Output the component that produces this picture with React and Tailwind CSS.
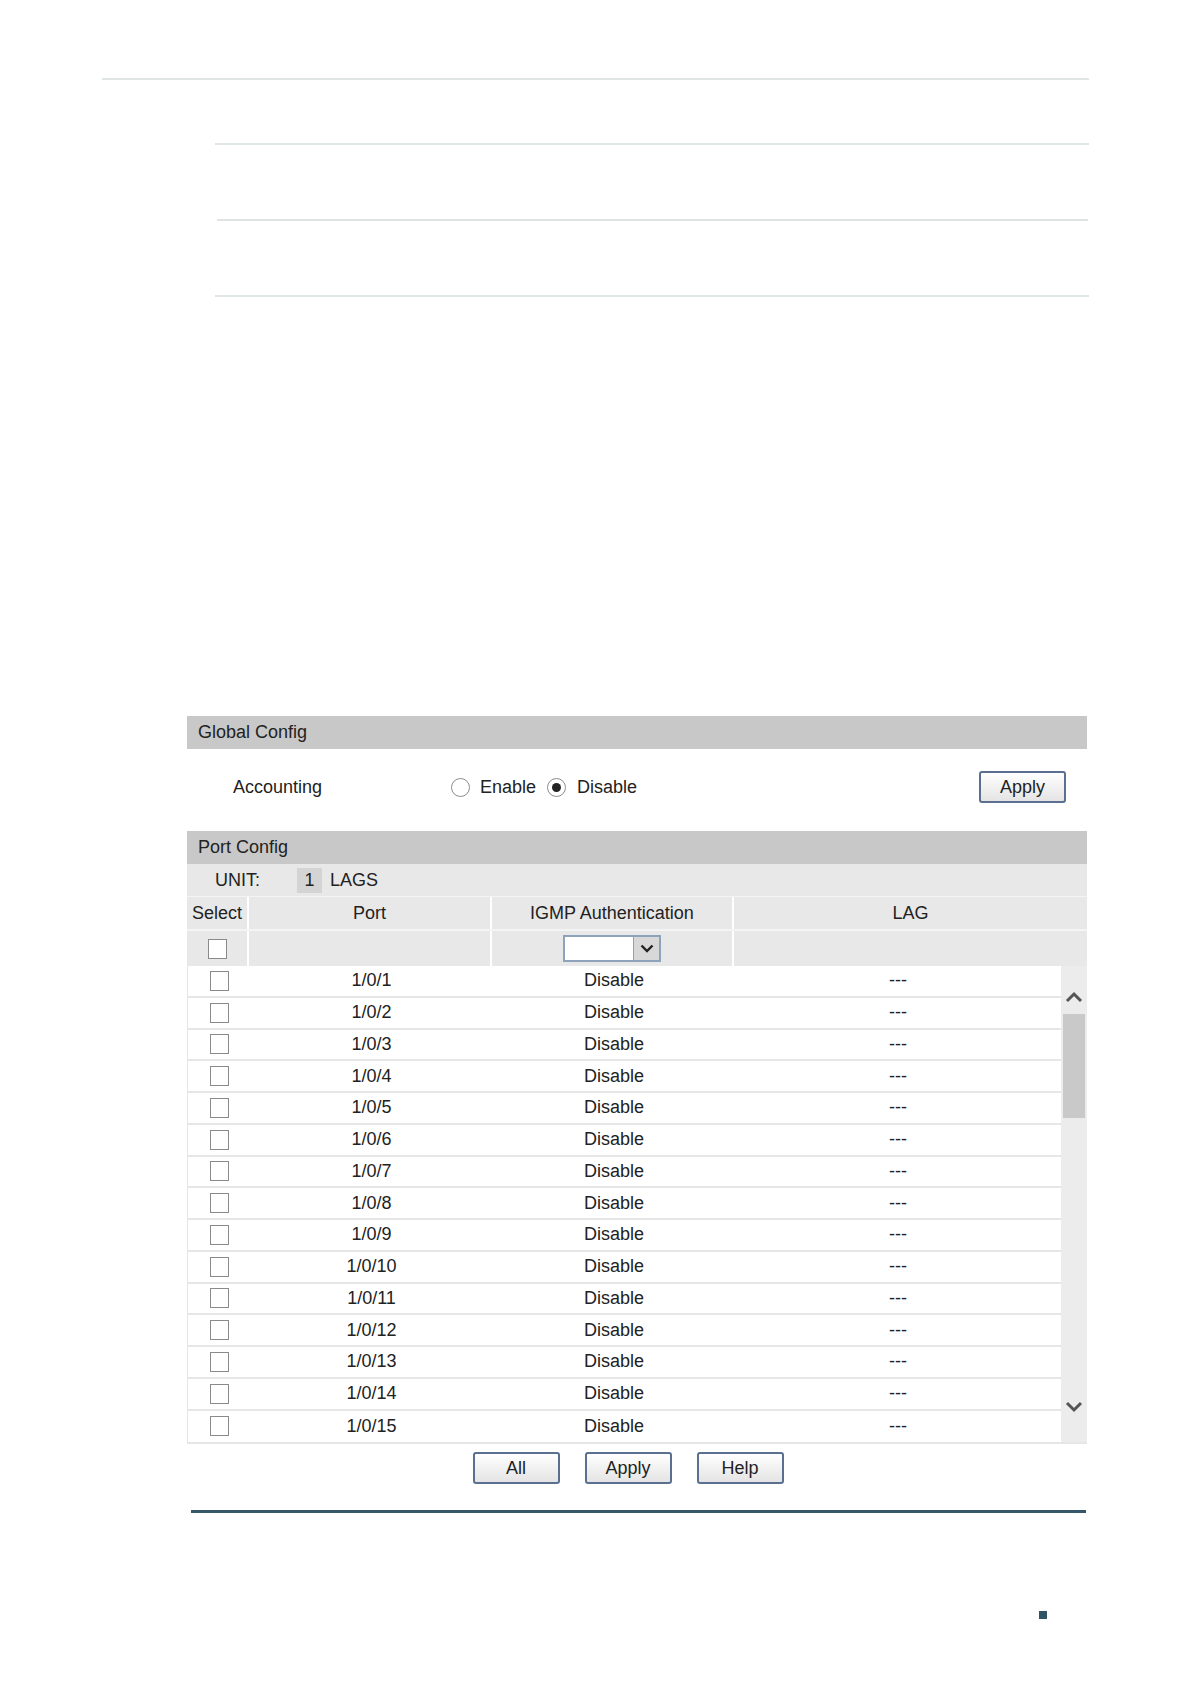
import React from 'react';

const ports = Array.from({ length: 15 }, (_, i) => `1/0/${i + 1}`);

function Checkbox() {
  return <span className="block w-[19px] h-[20px] border border-[#8a8a8a] bg-white" />;
}

function Btn({ children }) {
  return (
    <button className="w-[87px] h-[32px] rounded-[3px] border-2 border-[#5b7090] bg-gradient-to-b from-white to-[#e4e4e4] text-[18px] text-[#222]">
      {children}
    </button>
  );
}

export default function App() {
  return (
    <div className="w-[1191px] h-[1684px] bg-white text-[#222] pt-[78px]" style={{ fontFamily: '"Liberation Sans", Arial, sans-serif' }}>
      {/* top rules */}
      <div className="ml-[102px] w-[987px] h-[2px] bg-[#e0e5e5]" />
      <div className="ml-[215px] mt-[63px] w-[874px] h-[2px] bg-[#dfe6e6]" />
      <div className="ml-[217px] mt-[74px] w-[871px] h-[2px] bg-[#dfe3e3]" />
      <div className="ml-[215px] mt-[74px] w-[874px] h-[2px] bg-[#dfe6e6]" />

      <div className="ml-[187px] mt-[419px] w-[900px] text-[18px]">
        {/* Global Config */}
        <div className="h-[33px] bg-[#c8c8c8] pl-[11px] flex items-center">Global Config</div>
        <div className="h-[82px] flex items-center pb-[6px]">
          <span className="ml-[46px] w-[218px]">Accounting</span>
          <span className="w-[19px] h-[19px] rounded-full border border-[#8c8c8c] bg-white" />
          <span className="ml-[10px]">Enable</span>
          <span className="ml-[11px] w-[19px] h-[19px] rounded-full border border-[#8c8c8c] bg-white flex items-center justify-center">
            <span className="w-[9px] h-[9px] rounded-full bg-[#222]" />
          </span>
          <span className="ml-[11px]">Disable</span>
          <div className="ml-auto mr-[21px]">
            <Btn>Apply</Btn>
          </div>
        </div>

        {/* Port Config */}
        <div className="h-[33px] bg-[#c8c8c8] pl-[11px] flex items-center">Port Config</div>
        <div className="h-[33px] bg-[#e8e8e8] flex items-center border-b border-[#f4f4f4]">
          <span className="ml-[28px] w-[82px]">UNIT:</span>
          <span className="w-[25px] h-[25px] bg-[#d4d4d4] flex items-center justify-center">1</span>
          <span className="ml-[8px]">LAGS</span>
        </div>
        <div className="grid grid-cols-[62px_243px_242px_1fr] bg-[#e8e8e8] h-[32px]">
          <div className="flex items-center justify-center border-r-2 border-white">Select</div>
          <div className="flex items-center justify-center border-r-2 border-white">Port</div>
          <div className="flex items-center justify-center border-r-2 border-white">IGMP Authentication</div>
          <div className="flex items-center justify-center">LAG</div>
        </div>
        <div className="grid grid-cols-[62px_243px_242px_1fr] bg-[#e8e8e8] h-[37px] border-t-2 border-[#f4f4f4]">
          <div className="flex items-center justify-center border-r-2 border-white"><Checkbox /></div>
          <div className="border-r-2 border-white" />
          <div className="flex items-center justify-center border-r-2 border-white">
            <div className="flex w-[98px] h-[27px] border-2 border-[#8fa2bc] bg-white">
              <div className="flex-1" />
              <div className="w-[26px] bg-[#d8d8d8] border-l border-[#8fa2bc] flex items-center justify-center">
                <svg width="14" height="9" viewBox="0 0 14 9"><path d="M1.5 1.5 L7 7 L12.5 1.5" fill="none" stroke="#222" strokeWidth="2.4" /></svg>
              </div>
            </div>
          </div>
          <div />
        </div>

        {/* rows + scrollbar */}
        <div className="flex border-l border-[#e6e6e6] border-b-2 border-b-[#e6e6e6]">
          <div className="flex-1">
            {ports.map((p) => (
              <div key={p} className="grid grid-cols-[62px_243px_242px_1fr] h-[31.75px] border-b-2 border-[#e6e6e6] last:border-b-0 bg-white">
                <div className="flex items-center justify-center"><Checkbox /></div>
                <div className="flex items-center justify-center">{p}</div>
                <div className="flex items-center justify-center">Disable</div>
                <div className="flex items-center justify-center">---</div>
              </div>
            ))}
          </div>
          <div className="w-[26px] bg-[#ececec] flex flex-col items-center">
            <svg className="mt-[25px]" width="18" height="12" viewBox="0 0 18 12"><path d="M2 10 L9 3 L16 10" fill="none" stroke="#555" strokeWidth="3" /></svg>
            <div className="mt-[11px] w-[22px] h-[104px] bg-[#c9c9c9]" />
            <div className="flex-1" />
            <svg className="mb-[29px]" width="18" height="12" viewBox="0 0 18 12"><path d="M2 2 L9 9 L16 2" fill="none" stroke="#555" strokeWidth="3" /></svg>
          </div>
        </div>

        <div className="mt-[8px] flex justify-center gap-[25px] pr-[18px]">
          <Btn>All</Btn>
          <Btn>Apply</Btn>
          <Btn>Help</Btn>
        </div>
      </div>

      <div className="ml-[191px] mt-[26px] w-[895px] h-[3px] bg-[#34576a]" />
      <div className="ml-[1039px] mt-[98px] w-[8px] h-[8px] bg-[#2f5565]" />
    </div>
  );
}
